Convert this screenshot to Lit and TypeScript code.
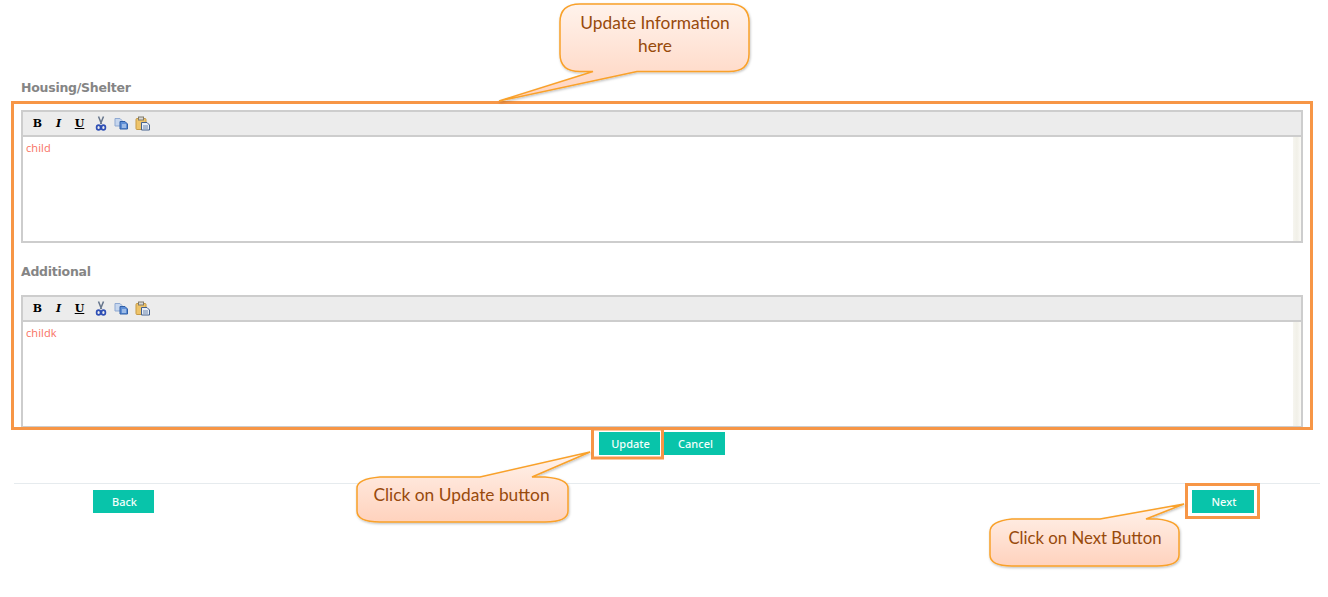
import { LitElement, html, css, svg } from "lit";
import { customElement, property } from "lit/decorators.js";

@customElement("rich-editor")
class RichEditor extends LitElement {
  @property() value = "";
  static styles = css`
    :host { display: flex; flex-direction: column; height: 133px; box-sizing: border-box; border: 2px solid #cdcdcd; background: #fff; }
    .bar { height: 23px; flex: none; background: #ececec; border-bottom: 2px solid #cdcdcd; display: flex; align-items: center; padding-left: 4px; }
    .t { width: 21px; height: 20px; display: flex; align-items: center; justify-content: center; color: #000; font: bold 11px "DejaVu Serif", serif; }
    .i { font-style: italic; }
    .u { text-decoration: underline; }
    .body { flex: 1; display: flex; justify-content: space-between; }
    .txt { padding: 4px 0 0 3px; font: 11px "Open Sans", sans-serif; line-height: 14px; color: #f8705f; letter-spacing: 0.1px; }
    .sb { width: 8px; margin-right: 0; background: linear-gradient(90deg, #f6f5ef, #f1f0e8, #fbfaf6); }
    svg { display: block; }
  `;
  render() {
    return html`
      <div class="bar">
        <span class="t">B</span>
        <span class="t i">I</span>
        <span class="t u">U</span>
        <span class="t"><svg width="14" height="15" viewBox="0 0 14 15">
          <path d="M4.5 0.5 L7.5 8 M9.5 0.5 L6.5 8" stroke="#66758c" stroke-width="1.5" fill="none"/>
          <ellipse cx="4.6" cy="11.5" rx="2" ry="2.4" fill="none" stroke="#2f4fb5" stroke-width="1.7"/>
          <ellipse cx="9.4" cy="11.5" rx="2" ry="2.4" fill="none" stroke="#2f4fb5" stroke-width="1.7"/>
        </svg></span>
        <span class="t"><svg width="15" height="13" viewBox="0 0 15 13">
          <path d="M1 1.5 H6 L8 3.5 V9 H1 Z" fill="#c6d6ee" stroke="#8fa9d2"/>
          <path d="M6 4.5 H11 L13.5 7 V12 H6 Z" fill="#5f8fd6" stroke="#2f5fa8"/>
          <path d="M8 8 H12 M8 10 H12" stroke="#dbe7f7" stroke-width="1"/>
        </svg></span>
        <span class="t"><svg width="16" height="15" viewBox="0 0 16 15">
          <rect x="1" y="2.5" width="10" height="11" rx="1" fill="#eec46a" stroke="#c69a45"/>
          <rect x="3.5" y="1" width="5" height="3" fill="#d8d8d8" stroke="#807a68"/>
          <path d="M6.5 6.5 H12 L14.5 9 V14 H6.5 Z" fill="#e8eef7" stroke="#44608c"/>
          <path d="M8 10 H13 M8 12 H13" stroke="#6c86ad" stroke-width="1"/>
        </svg></span>
      </div>
      <div class="body">
        <div class="txt">${this.value}</div>
        <div class="sb"></div>
      </div>
    `;
  }
}

const bubble = (d: string) => svg`<path d=${d} fill="url(#bub)" stroke="#f9a12a" stroke-width="1.5" filter="url(#sh)"/>`;

@customElement("app-root")
class AppRoot extends LitElement {
  static styles = css`
    :host { display: block; position: relative; width: 1328px; height: 597px; overflow: hidden; background: #fff; }
    .form { padding: 78px 25px 0 21px; }
    .label { height: 20px; font: bold 12.5px/20px "DejaVu Sans", sans-serif; color: #858585; letter-spacing: -0.25px; }
    .first { margin-bottom: 12px; }
    .second { margin-top: 19px; margin-bottom: 13px; }
    .actions { display: flex; gap: 4px; margin-top: 4px; padding-left: 578px; }
    .btn { width: 61px; height: 23px; box-sizing: border-box; padding-left: 2px; display: flex; align-items: center; justify-content: center; background: #08c4aa; color: #f4fffc; font: 500 11px "Noto Sans", sans-serif; }
    .rule { height: 1px; background: #e6ebee; margin: 28px -17px 0 -7px; }
    .nav { display: flex; justify-content: space-between; margin-top: 6px; padding: 0 49px 0 72px; }
    .nav .next { width: 62px; }
    .overlay { position: absolute; inset: 0; }
    .overlay text { font-family: Lato, "Noto Sans", sans-serif; font-size: 17.35px; fill: #984a0c; text-anchor: middle; }
    .overlay text.small { font-size: 16.75px; }
  `;
  render() {
    return html`
      <div class="form">
        <div class="label first">Housing/Shelter</div>
        <rich-editor value="child"></rich-editor>
        <div class="label second">Additional</div>
        <rich-editor value="childk"></rich-editor>
        <div class="actions">
          <div class="btn">Update</div>
          <div class="btn">Cancel</div>
        </div>
        <div class="rule"></div>
        <div class="nav">
          <div class="btn">Back</div>
          <div class="btn next">Next</div>
        </div>
      </div>
      <svg class="overlay" width="1328" height="597" viewBox="0 0 1328 597">
        <defs>
          <linearGradient id="bub" x1="0" y1="0" x2="0" y2="1">
            <stop offset="0" stop-color="#fff3ec"/>
            <stop offset="1" stop-color="#ffd2bd"/>
          </linearGradient>
          <filter id="sh" x="-10%" y="-10%" width="120%" height="125%">
            <feDropShadow dx="0.7" dy="1.2" stdDeviation="0.8" flood-color="#000" flood-opacity="0.25"/>
          </filter>
        </defs>
        <g fill="none" stroke="#f79646" stroke-width="3">
          <rect x="12.5" y="102.5" width="1299" height="326"/>
          <rect x="592.5" y="429" width="70" height="29"/>
          <rect x="1186.5" y="484.5" width="72" height="33"/>
        </g>
        ${bubble("M580 4 H729 Q749 4 749 22 V54 Q749 71.5 729 71.5 H637 L499 101 L593 71.5 H580 Q560 71.5 560 54 V22 Q560 4 580 4 Z")}
        <text x="655" y="29">Update Information</text>
        <text x="655" y="52">here</text>
        ${bubble("M380 477 H480 L590 452 L532 477 H545 Q568 479 568 488 V511 Q568 522 545 522 H380 Q357 522 357 511 V488 Q357 479 380 477 Z")}
        <text x="461.5" y="501">Click on Update button</text>
        ${bubble("M1012 519 H1100 L1184 504 L1146 519 H1157 Q1179 521 1179 532 V555 Q1179 566 1157 566 H1012 Q990 566 990 555 V532 Q990 521 1012 519 Z")}
        <text class="small" x="1085" y="544">Click on Next Button</text>
      </svg>
    `;
  }
}
